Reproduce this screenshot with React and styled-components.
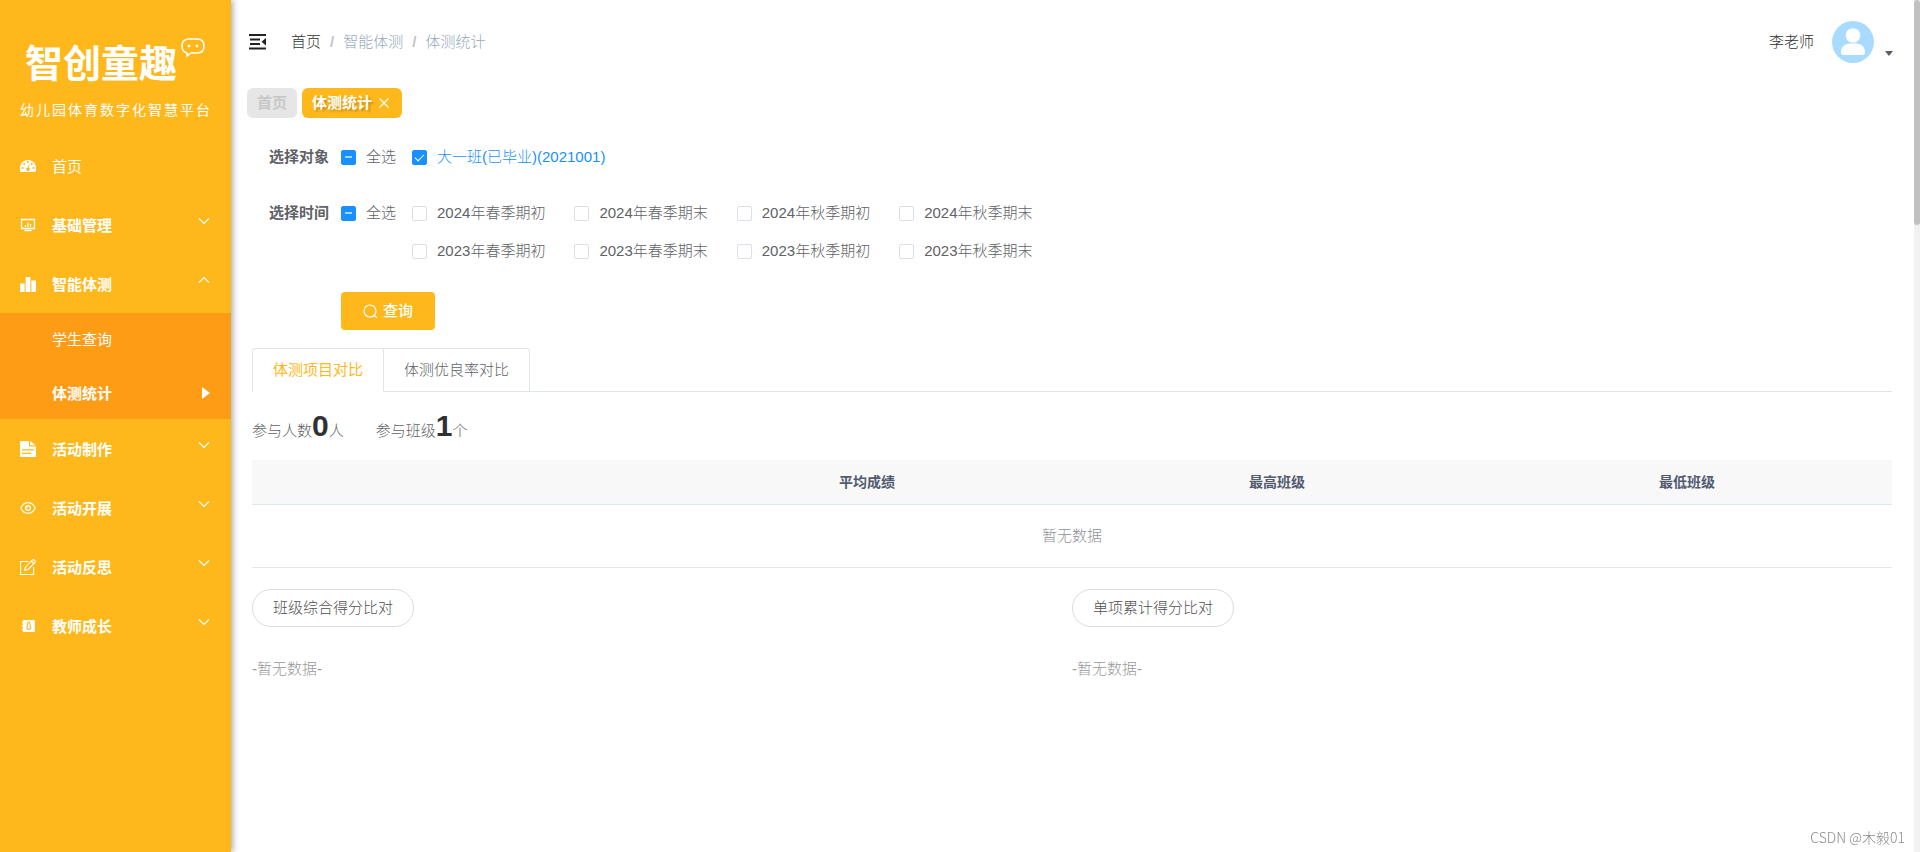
import React, { useState } from "react";
import styled, { createGlobalStyle, css } from "styled-components";

const GlobalStyle = createGlobalStyle`
  * { box-sizing: border-box; }
  body {
    margin: 0;
    background: #fff;
    color: #606266;
    font: 15px/20px "Liberation Sans", "Noto Sans CJK SC", sans-serif;
    font-weight: 300;
  }
  button, input { font: inherit; color: inherit; }
  a { color: inherit; text-decoration: none; }
  p, ul, ol, h1, h2 { margin: 0; padding: 0; }
  ul, ol { list-style: none; }
`;

const Shell = styled.div`
  display: flex;
  min-height: 100vh;
`;

/* ---------- sidebar ---------- */

const Sidebar = styled.aside`
  flex: 0 0 231px;
  background: #ffb81c;
  color: #fff;
  box-shadow: 2px 0 6px rgba(0, 21, 41, 0.35);
  z-index: 1;
`;

const Brand = styled.div`
  height: 136px;
  padding-top: 36px;
`;

const BrandTop = styled.div`
  display: flex;
  align-items: flex-start;
  gap: 3px;
  padding-left: 25px;
  height: 60px;
`;

const BrandName = styled.h1`
  font-size: 38px;
  line-height: 56px;
  font-weight: 700;
`;

const BrandLine = styled.p`
  padding: 4px 0 0 20px;
  font-size: 14px;
  letter-spacing: 2px;
  white-space: nowrap;
  font-weight: 400;
`;

const menuRow = css`
  display: flex;
  align-items: center;
  width: 100%;
  border: 0;
  padding: 0 21px 0 20px;
  background: none;
  color: #fff;
  text-align: left;
  cursor: pointer;
`;

const MenuButton = styled.button`
  ${menuRow}
  height: 59px;
  font-weight: 700;
`;

const MenuLink = styled.a`
  ${menuRow}
  height: 59px;
  font-weight: 400;
`;

const MenuIcon = styled.svg`
  flex: none;
  width: 16px;
  height: 16px;
  margin-right: 16px;
`;

const MenuLabel = styled.span`
  flex: 1;
  padding-top: 2px;
`;

const Chevron = styled.svg`
  width: 12px;
  height: 12px;
  margin-bottom: 7px;
`;

const SubMenu = styled.ul`
  background: #ff9c16;
`;

const SubLink = styled.a`
  ${menuRow}
  height: 53px;
  padding-left: 52px;
  font-weight: ${(p) => (p.$active ? 700 : 400)};
`;

const Pointer = styled.span`
  border: 6px solid transparent;
  border-left: 8px solid #fff;
  border-right: 0;
`;

/* ---------- header ---------- */

const Main = styled.main`
  flex: 1;
  min-width: 0;
`;

const Header = styled.header`
  display: flex;
  align-items: center;
  height: 84px;
  padding: 0 21px 0 18px;
`;

const FoldButton = styled.button`
  display: flex;
  padding: 0;
  border: 0;
  background: none;
  margin-right: 24px;
  cursor: pointer;
`;

const Crumbs = styled.ol`
  display: flex;
  flex: 1;
  color: #97a8be;

  li + li::before {
    content: "/";
    margin: 0 9px;
    color: #c0c4cc;
    font-weight: 700;
  }
  li:first-child { color: #303133; }
`;

const UserButton = styled.button`
  display: flex;
  align-items: center;
  padding: 0;
  border: 0;
  background: none;
  color: #303133;
  cursor: pointer;
`;

const Avatar = styled.svg`
  width: 42px;
  height: 42px;
  margin: 0 11px 0 18px;
`;

const Caret = styled.span`
  margin-top: 22px;
  border: 4px solid transparent;
  border-top: 5px solid #5a5e66;
  border-bottom: 0;
`;

const Tags = styled.nav`
  display: flex;
  gap: 5px;
  padding: 4px 16px 0;
`;

const Tag = styled.a`
  display: flex;
  align-items: center;
  height: 30px;
  padding: 0 10px;
  border-radius: 6px;
  font-weight: 700;
  background: ${(p) => (p.$active ? "#ffb81c" : "#e6e6e6")};
  color: ${(p) => (p.$active ? "#fff" : "#c8c8c8")};
  text-shadow: ${(p) => (p.$active ? "2px 2px 2px rgba(0, 0, 0, 0.2)" : "none")};
`;

const TagClose = styled.svg`
  width: 10px;
  height: 10px;
  margin: 0 3px 0 7px;
`;

/* ---------- filters ---------- */

const Filters = styled.form`
  padding: 20px 38px 0;
`;

const FilterRow = styled.fieldset`
  display: flex;
  align-items: flex-start;
  min-width: 0;
  margin: 0 0 18px;
  padding: 0;
  border: 0;
`;

const FilterName = styled.span`
  width: 72px;
  line-height: 38px;
  font-weight: 700;
`;

const Options = styled.div`
  display: grid;
  grid-template-columns: repeat(${(p) => p.$columns}, max-content);
  column-gap: 29px;
`;

const Check = styled.label`
  display: flex;
  align-items: center;
  height: 38px;
  gap: 10px;
  margin-right: ${(p) => (p.$all ? "16px" : "0")};
  white-space: nowrap;
  color: ${(p) => (p.$on ? "#1890ff" : "#606266")};
  cursor: pointer;
`;

const Box = styled.input`
  appearance: none;
  display: grid;
  place-items: center;
  width: 15px;
  height: 15px;
  margin: 0;
  border: 1px solid #dcdfe6;
  border-radius: 2px;
  background: #fff;

  &:checked,
  &:indeterminate {
    border-color: #1890ff;
    background: #1890ff;
  }
  &:indeterminate::after {
    content: "";
    width: 7px;
    height: 2px;
    background: #a3d3ff;
  }
  &:checked:not(:indeterminate)::after {
    content: "";
    width: 4px;
    height: 8px;
    margin-bottom: 2px;
    border: solid #fff;
    border-width: 0 1px 1px 0;
    transform: rotate(45deg);
  }
`;

const QueryButton = styled.button`
  display: flex;
  align-items: center;
  justify-content: center;
  gap: 5px;
  width: 94px;
  height: 38px;
  margin: 22px 0 18px 72px;
  padding: 0;
  border: 0;
  border-radius: 4px;
  background: #ffb81c;
  color: #fff;
  font-weight: 500;
  cursor: pointer;
`;

/* ---------- results ---------- */

const Results = styled.section`
  padding: 0 22px 0 21px;
`;

const TabBar = styled.div`
  display: flex;
  border-bottom: 1px solid #dfe4ed;
`;

const Tab = styled.button`
  height: 44px;
  margin-bottom: -1px;
  padding: 0 20px;
  border: 1px solid #dfe4ed;
  border-left-width: ${(p) => (p.$active ? "1px" : "0")};
  border-bottom-color: ${(p) => (p.$active ? "#fff" : "#dfe4ed")};
  border-radius: ${(p) => (p.$active ? "4px 0 0 0" : "0 4px 0 0")};
  background: #fff;
  color: ${(p) => (p.$active ? "#ffb81c" : "#606266")};
  font-weight: ${(p) => (p.$active ? 400 : 300)};
  cursor: pointer;
`;

const Stats = styled.div`
  display: flex;
  gap: 32px;
  height: 68px;
  padding-top: 16px;
`;

const Stat = styled.p`
  line-height: 36px;
  strong {
    font-size: 30px;
    font-weight: 700;
    color: #303133;
  }
`;

const DataTable = styled.table`
  width: 100%;
  table-layout: fixed;
  border-collapse: collapse;
  font-size: 15px;

  th {
    height: 44px;
    padding: 0;
    background: #f8f8f9;
    border-bottom: 1px solid #dfe6ec;
    color: #515a6e;
    font-size: 14px;
    font-weight: 700;
  }
  td {
    height: 63px;
    padding: 0;
    border-bottom: 1px solid #e6e6f0;
    color: #909399;
    text-align: center;
  }
`;

const Charts = styled.div`
  display: grid;
  grid-template-columns: 1fr 1fr;
  padding-top: 21px;
`;

const PillButton = styled.button`
  height: 38px;
  padding: 0 20px;
  border: 1px solid #dcdcdc;
  border-radius: 19px;
  background: #fff;
  color: #505050;
  cursor: pointer;
`;

const Empty = styled.p`
  padding-top: 32px;
  color: #999;
`;

const ScrollRail = styled.div`
  flex: 0 0 6px;
  background: #f1f1f1;
`;

const ScrollThumb = styled.div`
  height: 225px;
  border-radius: 3px;
  background: #c1c1c1;
`;

const Watermark = styled.span`
  position: fixed;
  right: 15px;
  bottom: 5px;
  font-family: "Noto Sans CJK SC", sans-serif;
  font-size: 14px;
  color: #8c8c8c;
`;

/* ---------- icon drawings, 16 x 16 ---------- */

const icons = {
  dashboard: (
    <>
      <path fill="#fff" d="M8 2a8 8 0 0 0-8 8v3q0 1 1 1h14q1 0 1-1v-3a8 8 0 0 0-8-8z" />
      <g fill="#ffb81c">
        <circle cx="2.7" cy="10" r="1" /><circle cx="4.2" cy="6" r="1" />
        <circle cx="8" cy="4" r="1" /><circle cx="11.8" cy="6" r="1" />
        <circle cx="13.3" cy="10" r="1" />
        <path d="M9.6 5.5 8.9 9.7a1.7 1.7 0 1 1-1.1-.2z" />
      </g>
    </>
  ),
  monitor: (
    <g fill="none" stroke="#fff" strokeWidth="1.3">
      <path d="M1.5 2.500h13v9h-13zM4.500 13.500h7M5.500 10v-2M8 10V5.500M10.500 10V7" />
    </g>
  ),
  bars: <path fill="#fff" d="M0 7.5h4.6V16H0zM5.6 1h4.8v15H5.6zM11.4 4.5H16V16h-4.6z" />,
  document: (
    <path fill="#fff" fillRule="evenodd" d="M1.5 0H9v5.5h7V15q0 1-1 1H1q-1 0-1-1V1.200Q0 0 1.500 0zM10.200 0 15.500 4.300h-5.300zM2 8.200v1.300h12V8.200zM2 11.800v1.300h9v-1.300z" />
  ),
  eye: (
    <g fill="none" stroke="#fff" strokeWidth="1.200">
      <path d="M.8 8Q3.200 2.700 8 2.700T15.200 8Q12.800 13.300 8 13.300T.8 8z" />
      <circle cx="8" cy="8" r="2.400" />
      <path d="M8 7.200a.8.8 0 0 0-.8.8" />
    </g>
  ),
  edit: (
    <g fill="none" stroke="#fff" strokeWidth="1.100">
      <path d="M8.500 2.500H.6v13h13V8M4.800 11.300l.7-3.400 7-7q.8-.6 1.800.3l.5.5q.9 1 .2 1.800l-7 7zM11.300 2l2.800 2.800" />
    </g>
  ),
  teacher: (
    <>
      <path fill="#fff" d="M3.500 2h10.700q.6 0 .6.600v10.800q0 .6-.6.600H3.500q-.6 0-.6-.6v-1.400H1.800v-1.200h1.100V8.600H1.500V7.400h1.400V5.200H1.800V4h1.100V2.600q0-.6.600-.6z" />
      <path fill="none" stroke="#ffb81c" strokeWidth="1.100" d="M7.500 4h2.500M7.900 4.500 6.900 10.500q1.800 1.800 3.800 0L9.700 4.500" />
    </>
  ),
};

function Arrow({ up }) {
  return (
    <Chevron viewBox="0 0 12 12" fill="none" stroke="#fff" strokeWidth="1.100">
      <path d={up ? "M1 8.500 6 3.500l5 5" : "M1 3.500l5 5 5-5"} />
    </Chevron>
  );
}

function MenuGroup({ icon, label, open }) {
  return (
    <MenuButton type="button" aria-expanded={!!open}>
      <MenuIcon viewBox="0 0 16 16">{icons[icon]}</MenuIcon>
      <MenuLabel>{label}</MenuLabel>
      <Arrow up={open} />
    </MenuButton>
  );
}

function CheckAll() {
  return (
    <Check $all>
      <Box type="checkbox" ref={(el) => { if (el) el.indeterminate = true; }} />
      全选
    </Check>
  );
}

function Option({ label, initial = false }) {
  const [on, setOn] = useState(initial);
  return (
    <Check $on={on}>
      <Box type="checkbox" checked={on} onChange={() => setOn(!on)} />
      {label}
    </Check>
  );
}

const terms = ["2024", "2023"].flatMap((year) =>
  ["春季期初", "春季期末", "秋季期初", "秋季期末"].map((t) => `${year}年${t}`)
);

export default function App() {
  return (
    <Shell>
      <GlobalStyle />
      <Sidebar>
        <Brand>
          <BrandTop>
            <BrandName>智创童趣</BrandName>
            <svg width="26" height="22" viewBox="0 0 26 22" fill="none" stroke="#fff" strokeWidth="1.500">
              <path d="M8 3h9q7 0 7 7t-7 7h-6l-4 3v-3q-5-1-5-7t6-7z" />
              <circle cx="9" cy="10" r="1" fill="#fff" strokeWidth="1" />
              <circle cx="17" cy="10" r="1" fill="#fff" strokeWidth="1" />
            </svg>
          </BrandTop>
          <BrandLine>幼儿园体育数字化智慧平台</BrandLine>
        </Brand>
        <nav>
          <MenuLink href="#home">
            <MenuIcon viewBox="0 0 16 16">{icons.dashboard}</MenuIcon>
            <MenuLabel>首页</MenuLabel>
          </MenuLink>
          <MenuGroup icon="monitor" label="基础管理" />
          <MenuGroup icon="bars" label="智能体测" open />
          <SubMenu>
            <li><SubLink href="#students">学生查询</SubLink></li>
            <li>
              <SubLink href="#stats" $active>
                <MenuLabel>体测统计</MenuLabel>
                <Pointer />
              </SubLink>
            </li>
          </SubMenu>
          <MenuGroup icon="document" label="活动制作" />
          <MenuGroup icon="eye" label="活动开展" />
          <MenuGroup icon="edit" label="活动反思" />
          <MenuGroup icon="teacher" label="教师成长" />
        </nav>
      </Sidebar>

      <Main>
        <Header>
          <FoldButton type="button" aria-label="收起菜单">
            <svg width="18" height="16" viewBox="0 0 18 16">
              <path fill="#222" d="M0 0h17v2H0zM1 4.500h10v2H1zM1 9h10v2H1zM0 13.500h17v2H0zM17 4v7.500l-4.500-3.750z" />
            </svg>
          </FoldButton>
          <Crumbs>
            <li><a href="#home">首页</a></li>
            <li>智能体测</li>
            <li>体测统计</li>
          </Crumbs>
          <UserButton type="button">
            李老师
            <Avatar viewBox="0 0 42 42">
              <circle cx="21" cy="21" r="21" fill="#a8dbff" />
              <circle cx="21" cy="14.500" r="7.300" fill="#fff" />
              <path fill="#fff" d="M17 22.500h8q8 1 8 9 0 2.500-2.500 2.500h-19Q9 34 9 31.500q0-8 8-9z" />
            </Avatar>
            <Caret />
          </UserButton>
        </Header>

        <Tags>
          <Tag href="#home">首页</Tag>
          <Tag href="#stats" $active>
            体测统计
            <TagClose viewBox="0 0 10 10" stroke="#fff" strokeWidth="1.200">
              <path d="M0.500 0.500l9 9M9.500 0.500l-9 9" />
            </TagClose>
          </Tag>
        </Tags>

        <Filters onSubmit={(e) => e.preventDefault()}>
          <FilterRow aria-label="选择对象">
            <FilterName>选择对象</FilterName>
            <CheckAll />
            <Options $columns={1}>
              <Option label="大一班(已毕业)(2021001)" initial />
            </Options>
          </FilterRow>
          <FilterRow aria-label="选择时间">
            <FilterName>选择时间</FilterName>
            <CheckAll />
            <Options $columns={4}>
              {terms.map((t) => <Option key={t} label={t} />)}
            </Options>
          </FilterRow>
          <QueryButton type="submit">
            <svg width="15" height="15" viewBox="0 0 15 15" fill="none" stroke="#fff" strokeWidth="1.200">
              <circle cx="7" cy="7" r="6" />
              <path d="M11.200 11.200l2.600 2.600" />
            </svg>
            查询
          </QueryButton>
        </Filters>

        <Results>
          <TabBar role="tablist">
            <Tab type="button" role="tab" aria-selected="true" $active>体测项目对比</Tab>
            <Tab type="button" role="tab" aria-selected="false">体测优良率对比</Tab>
          </TabBar>
          <Stats>
            <Stat>参与人数<strong>0</strong>人</Stat>
            <Stat>参与班级<strong>1</strong>个</Stat>
          </Stats>
          <DataTable>
            <thead>
              <tr>
                <th />
                <th>平均成绩</th>
                <th>最高班级</th>
                <th>最低班级</th>
              </tr>
            </thead>
            <tbody>
              <tr><td colSpan={4}>暂无数据</td></tr>
            </tbody>
          </DataTable>
          <Charts>
            <div>
              <PillButton type="button">班级综合得分比对</PillButton>
              <Empty>-暂无数据-</Empty>
            </div>
            <div>
              <PillButton type="button">单项累计得分比对</PillButton>
              <Empty>-暂无数据-</Empty>
            </div>
          </Charts>
        </Results>
      </Main>
      <ScrollRail><ScrollThumb /></ScrollRail>
      <Watermark>CSDN @木毅01</Watermark>
    </Shell>
  );
}
